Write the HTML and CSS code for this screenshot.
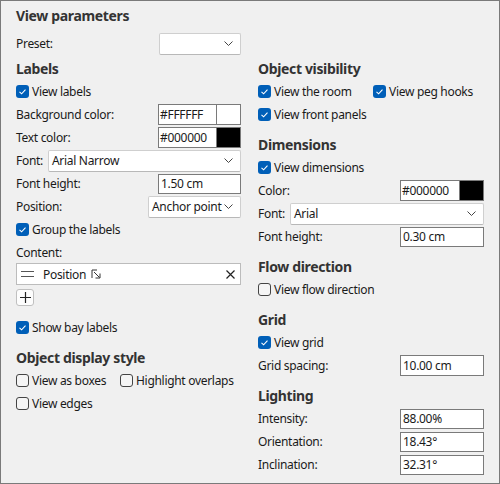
FILE: index.html
```html
<!DOCTYPE html>
<html>
<head>
<meta charset="utf-8">
<link rel="stylesheet" href="styles.css">
</head>
<body>
<div class="panel">
  <div class="title">View parameters</div>
  <div class="row preset-row">
    <span>Preset:</span>
    <div class="select w-preset"><span class="sel-text"></span><svg class="chev" width="9" height="5" viewBox="0 0 9 5"><path d="M0.5 0.5L4.5 4.5L8.5 0.5" fill="none" stroke="#444" stroke-width="1"/></svg></div>
  </div>
  <div class="columns">
    <div class="col">
      <section class="sec">
        <div class="head">Labels</div>
        <div class="row"><span class="cb on"><svg width="13" height="13" viewBox="0 0 13 13"><path d="M3.5 6.8L5.6 8.8L9.5 4.6" fill="none" stroke="#fff" stroke-width="1.1"/></svg></span>View labels</div>
        <div class="row between"><span>Background color:</span><div class="color w-left"><span class="ctext">#FFFFFF</span><span class="swatch white"></span></div></div>
        <div class="row between"><span>Text color:</span><div class="color w-left"><span class="ctext">#000000</span><span class="swatch black"></span></div></div>
        <div class="row between"><span>Font:</span><div class="select w-font-l"><span class="sel-text">Arial Narrow</span><svg class="chev" width="9" height="5" viewBox="0 0 9 5"><path d="M0.5 0.5L4.5 4.5L8.5 0.5" fill="none" stroke="#444" stroke-width="1"/></svg></div></div>
        <div class="row between"><span>Font height:</span><div class="input w-left">1.50 cm</div></div>
        <div class="row between"><span>Position:</span><div class="select w-pos"><span class="sel-text">Anchor point</span><svg class="chev" width="9" height="5" viewBox="0 0 9 5"><path d="M0.5 0.5L4.5 4.5L8.5 0.5" fill="none" stroke="#444" stroke-width="1"/></svg></div></div>
        <div class="row"><span class="cb on"><svg width="13" height="13" viewBox="0 0 13 13"><path d="M3.5 6.8L5.6 8.8L9.5 4.6" fill="none" stroke="#fff" stroke-width="1.1"/></svg></span>Group the labels</div>
        <div class="row content-label">Content:</div>
        <div class="list-item">
          <svg class="grip" width="13" height="6" viewBox="0 0 13 6"><path d="M0 0.5H13M0 5.5H13" stroke="#555" stroke-width="1"/></svg>
          <span class="item-text">Position</span>
          <svg class="corner" width="10" height="10" viewBox="0 0 10 10"><path d="M1 9V1H6" fill="none" stroke="#333" stroke-width="1"/><path d="M3 3L8.5 8.5" fill="none" stroke="#333" stroke-width="1"/><path d="M9 4.5V9H4.5" fill="none" stroke="#333" stroke-width="1"/></svg>
          <svg class="close" width="9" height="9" viewBox="0 0 9 9"><path d="M0.5 0.5L8.5 8.5M8.5 0.5L0.5 8.5" stroke="#222" stroke-width="1.2"/></svg>
        </div>
        <div class="add-btn"><svg width="11" height="11" viewBox="0 0 11 11"><path d="M5.5 0V11M0 5.5H11" stroke="#222" stroke-width="1.2"/></svg></div>
        <div class="row bay"><span class="cb on"><svg width="13" height="13" viewBox="0 0 13 13"><path d="M3.5 6.8L5.6 8.8L9.5 4.6" fill="none" stroke="#fff" stroke-width="1.1"/></svg></span>Show bay labels</div>
      </section>
      <section class="sec">
        <div class="head">Object display style</div>
        <div class="row">
          <span class="pair pair-l"><span class="cb"></span>View as boxes</span>
          <span class="pair"><span class="cb"></span>Highlight overlaps</span>
        </div>
        <div class="row"><span class="cb"></span>View edges</div>
      </section>
    </div>
    <div class="col">
      <section class="sec">
        <div class="head">Object visibility</div>
        <div class="row">
          <span class="pair pair-r"><span class="cb on"><svg width="13" height="13" viewBox="0 0 13 13"><path d="M3.5 6.8L5.6 8.8L9.5 4.6" fill="none" stroke="#fff" stroke-width="1.1"/></svg></span>View the room</span>
          <span class="pair"><span class="cb on"><svg width="13" height="13" viewBox="0 0 13 13"><path d="M3.5 6.8L5.6 8.8L9.5 4.6" fill="none" stroke="#fff" stroke-width="1.1"/></svg></span>View peg hooks</span>
        </div>
        <div class="row"><span class="cb on"><svg width="13" height="13" viewBox="0 0 13 13"><path d="M3.5 6.8L5.6 8.8L9.5 4.6" fill="none" stroke="#fff" stroke-width="1.1"/></svg></span>View front panels</div>
      </section>
      <section class="sec">
        <div class="head">Dimensions</div>
        <div class="row"><span class="cb on"><svg width="13" height="13" viewBox="0 0 13 13"><path d="M3.5 6.8L5.6 8.8L9.5 4.6" fill="none" stroke="#fff" stroke-width="1.1"/></svg></span>View dimensions</div>
        <div class="row between"><span>Color:</span><div class="color w-right"><span class="ctext">#000000</span><span class="swatch black"></span></div></div>
        <div class="row between"><span>Font:</span><div class="select w-font-r"><span class="sel-text">Arial</span><svg class="chev" width="9" height="5" viewBox="0 0 9 5"><path d="M0.5 0.5L4.5 4.5L8.5 0.5" fill="none" stroke="#444" stroke-width="1"/></svg></div></div>
        <div class="row between"><span>Font height:</span><div class="input w-right">0.30 cm</div></div>
      </section>
      <section class="sec">
        <div class="head">Flow direction</div>
        <div class="row"><span class="cb"></span>View flow direction</div>
      </section>
      <section class="sec">
        <div class="head">Grid</div>
        <div class="row"><span class="cb on"><svg width="13" height="13" viewBox="0 0 13 13"><path d="M3.5 6.8L5.6 8.8L9.5 4.6" fill="none" stroke="#fff" stroke-width="1.1"/></svg></span>View grid</div>
        <div class="row between"><span>Grid spacing:</span><div class="input w-right tall">10.00 cm</div></div>
      </section>
      <section class="sec">
        <div class="head">Lighting</div>
        <div class="row between"><span>Intensity:</span><div class="input w-right">88.00%</div></div>
        <div class="row between"><span>Orientation:</span><div class="input w-right">18.43°</div></div>
        <div class="row between"><span>Inclination:</span><div class="input w-right">32.31°</div></div>
      </section>
    </div>
  </div>
</div>
</body>
</html>
```
FILE: styles.css
```css
* { box-sizing: border-box; }
html, body { margin: 0; padding: 0; }
body {
  width: 500px;
  height: 484px;
  background: #f0f0f0;
  font-family: "Noto Sans", "Open Sans", sans-serif;
  font-size: 12px;
  letter-spacing: -0.3px;
  color: #1a1a1a;
}
.panel {
  width: 500px;
  height: 484px;
  border: 1px solid #7a7a7a;
  padding: 3px 15px 0 15px;
  background: #f0f0f0;
}
.title {
  height: 23px;
  line-height: 23px;
  font-weight: 700;
  font-size: 14px;
  letter-spacing: -0.35px;
  color: #333;
}
.row {
  height: 23px;
  display: flex;
  align-items: center;
  white-space: nowrap;
}
.between { justify-content: space-between; }
.preset-row {
  width: 225px;
  margin-top: 5px;
  justify-content: space-between;
}
.columns {
  margin-top: 2px;
  display: grid;
  grid-template-columns: 225px 226px;
  column-gap: 17px;
}
.col { display: flex; flex-direction: column; gap: 7px; }
.sec { display: flex; flex-direction: column; }
.head {
  height: 23px;
  line-height: 23px;
  font-weight: 700;
  font-size: 14px;
  letter-spacing: -0.35px;
  color: #333;
}
.cb {
  width: 13px;
  height: 13px;
  border: 1px solid #444;
  border-radius: 3px;
  margin-right: 3px;
  flex: none;
  display: inline-flex;
  background: #f5f5f5;
}
.cb.on {
  border: none;
  background: #005fb8;
}
.pair { display: inline-flex; align-items: center; }
.pair-l { width: 104px; }
.pair-r { width: 115px; }
.select {
  height: 22px;
  background: #fff;
  border: 1px solid #cfcfcf;
  border-bottom-color: #b8b8b8;
  border-radius: 2px;
  display: flex;
  align-items: center;
  justify-content: space-between;
  padding: 0 7px 0 3px;
}
.w-preset { width: 82px; }
.w-font-l { width: 193px; }
.w-font-r { width: 194px; }
.w-pos { width: 93px; }
.input {
  height: 20px;
  background: #fff;
  border: 1px solid #7a7a7a;
  padding: 0 2px;
  display: flex;
  align-items: center;
}
.input.tall { height: 21px; }
.w-left { width: 83px; }
.w-right { width: 84px; }
.color {
  height: 21px;
  display: flex;
  border: 1px solid #7a7a7a;
  background: #fff;
}
.ctext {
  flex: 1;
  padding: 0 1px;
  display: flex;
  align-items: center;
  border-right: 1px solid #7a7a7a;
}
.swatch { width: 23px; }
.swatch.black { background: #000; }
.swatch.white { background: #fff; }
.content-label { height: 22px; }
.list-item {
  height: 22px;
  background: #fff;
  border: 1px solid #bcbcbc;
  display: flex;
  align-items: center;
  padding: 0 4px 0 4px;
}
.grip { margin-right: 9px; }
.item-text { margin-right: 5px; }
.close { margin-left: auto; margin-right: 1px; }
.add-btn {
  margin-top: 4px;
  width: 18px;
  height: 17px;
  background: #fdfdfd;
  border: 1px solid #c0c0c0;
  border-radius: 3px;
  display: flex;
  align-items: center;
  justify-content: center;
}
.bay { margin-top: 10px; }
```
